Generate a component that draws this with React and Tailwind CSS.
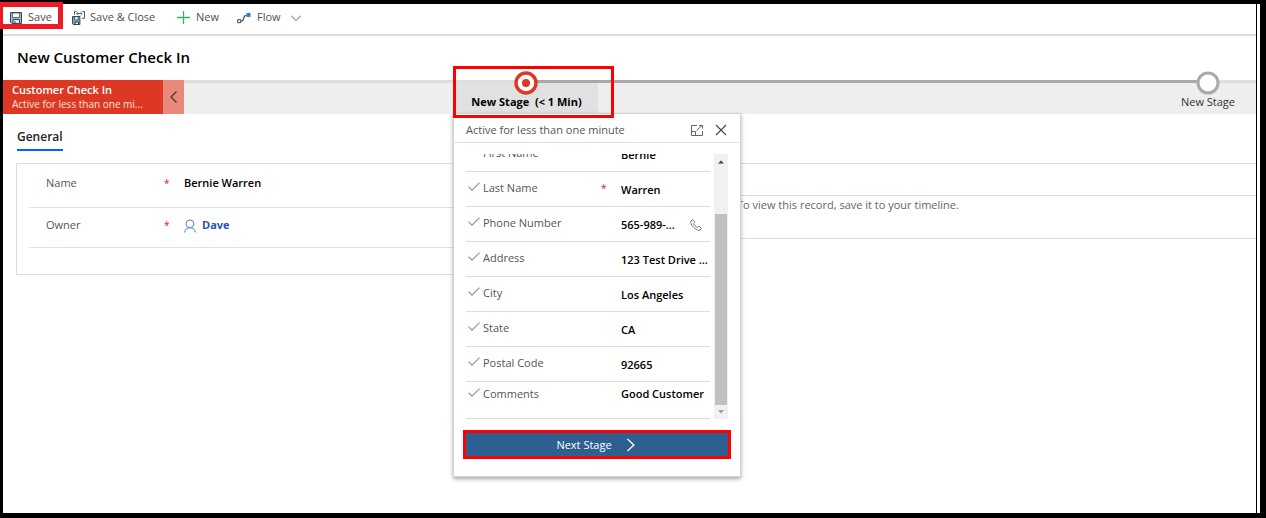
import React from "react";

const fields = [
  { id: "first", label: "First Name", value: "Bernie", clipped: true },
  { id: "last", label: "Last Name", value: "Warren", required: true },
  { id: "phone", label: "Phone Number", value: "565-989-...", phone: true },
  { id: "address", label: "Address", value: "123 Test Drive ..." },
  { id: "city", label: "City", value: "Los Angeles" },
  { id: "state", label: "State", value: "CA" },
  { id: "postal", label: "Postal Code", value: "92665" },
  { id: "comments", label: "Comments", value: "Good Customer", last: true },
];

function SaveIcon() {
  return (
    <svg className="h-3 w-3" viewBox="0 0 12 12" fill="none">
      <path d="M.5.5h11v11H1.800L.5 10.200z" fill="#8ec1e8" stroke="#3f474e" />
      <path d="M2.500 1h7v4.500h-7z" fill="#fff" stroke="#3f474e" strokeWidth=".8" />
      <path d="M3 7.500h6.500v4H3z" fill="#dfe9f1" stroke="#3f474e" />
      <path d="M5 9v2.500" stroke="#3f474e" />
    </svg>
  );
}

function SaveCloseIcon() {
  return (
    <svg className="h-[14px] w-[14px]" viewBox="0 0 14 14" fill="none">
      <path d="M.5 5.500h7.400v8H1.300l-.8-.8z" fill="#6fb1e4" stroke="#3b4248" />
      <path d="M2.500 5.800h3.800v3H2.500z" fill="#fff" stroke="#3b4248" strokeWidth=".8" />
      <path d="M3 11h3.500v2.500H3z" fill="#dfe9f1" stroke="#3b4248" />
      <path d="M2.500 3.700V.5h2M10.500.5h2v6.800h-2.500" stroke="#55595d" />
      <path d="M4.500 2.500h5.500M6.300 1 4.600 2.500 6.300 4M8.500 1l1.600 1.500L8.500 4" stroke="#2b7cd3" />
    </svg>
  );
}

function PlusIcon() {
  return (
    <svg className="h-[13px] w-[13px]" viewBox="0 0 13 13" fill="none">
      <path d="M6.500 0v13M0 6.500h13" stroke="#3fae68" strokeWidth="1.300" />
    </svg>
  );
}

function FlowIcon() {
  return (
    <svg className="h-3 w-[14px]" viewBox="0 0 14 12" fill="none">
      <path d="M.7 7.700h3v3h-3z" stroke="#444" />
      <path d="M4 9.200c4.500 0 1-6 5.500-6" stroke="#444" strokeWidth="1.100" />
      <path d="M9.500 1h4v4h-4z" fill="#2b7cd3" />
    </svg>
  );
}

function Chevron({ className, d }) {
  return (
    <svg className={className} viewBox="0 0 12 12" fill="none">
      <path d={d} stroke="currentColor" strokeWidth="1.100" />
    </svg>
  );
}

function CheckIcon() {
  return (
    <svg className="h-[9px] w-3 shrink-0" viewBox="0 0 12 9" fill="none">
      <path d="M.5 4.700 4 8.200 11.500.6" stroke="#7f9f7b" strokeWidth="1.100" />
    </svg>
  );
}

function PhoneIcon() {
  return (
    <svg className="h-3 w-3" viewBox="0 0 12 12" fill="none">
      <path
        d="M2.600.6 1 2.100c-.8 1 0 3.700 2.700 6.300s5.200 3.400 6.300 2.600l1.500-1.600-2.700-2.200-1.400 1.300C6 8 4 6 3.600 4.700l1.200-1.400z"
        stroke="#666"
        strokeWidth=".9"
        strokeLinejoin="round"
      />
    </svg>
  );
}

function PersonIcon() {
  return (
    <svg className="h-[14px] w-3" viewBox="0 0 12 14" fill="none">
      <circle cx="6" cy="4.800" r="3.900" stroke="#5b7fc4" />
      <path d="M.6 13.500C.8 10.500 3 8.700 6 8.700s5.200 1.800 5.400 4.800" stroke="#5b7fc4" />
    </svg>
  );
}

function PopOutIcon() {
  return (
    <svg className="h-[11px] w-3" viewBox="0 0 12 11" fill="none">
      <path d="M6 .5H.5v10h11V6M.5 6.500h4v4M5.500 5.500l5.500-5M8 .5h3.500v3.200" stroke="#555" strokeWidth=".9" />
    </svg>
  );
}

function CommandBar() {
  return (
    <nav className="relative flex h-8 items-center border-b-2 border-[#dcdcdc] pb-[3px] pl-[7px] text-[11px] text-[#505050]">
      <div className="pointer-events-none absolute -left-[5px] -top-0.5 h-[27px] w-[65px] border-[5px] border-[#ed1c24]" />
      <button className="flex w-[62px] items-center gap-1.5"><SaveIcon />Save</button>
      <button className="flex w-[105px] items-center gap-1"><SaveCloseIcon />Save &amp; Close</button>
      <button className="flex w-[60px] items-center gap-1.5"><PlusIcon />New</button>
      <button className="flex items-center gap-1.5"><FlowIcon />Flow</button>
      <button aria-label="More flow commands" className="ml-2.5">
        <Chevron className="h-2.5 w-2.5" d="M0 3 6 9l6-6" />
      </button>
    </nav>
  );
}

function FlyoutField({ field }) {
  const inputId = `stage-${field.id}`;
  return (
    <div
      className={
        field.last
          ? "flex h-[37px] shrink-0 items-start border-b border-[#dcdcdc] pt-1"
          : "flex h-[35px] shrink-0 items-start border-b border-[#dcdcdc] pt-2"
      }
    >
      <div className="flex h-4 w-[135px] items-start gap-[3px] pl-0.5">
        <div className={field.clipped ? "invisible" : "pt-0.5"}><CheckIcon /></div>
        <label htmlFor={inputId} className="text-[#555]">{field.label}</label>
      </div>
      <span className="w-5 text-[10px] leading-4 text-[#e81123]">{field.required ? "*" : ""}</span>
      <div className={field.last ? "flex min-w-0 flex-1 items-center" : "flex min-w-0 flex-1 items-center pt-0.5"}>
        <input id={inputId} defaultValue={field.value} className="h-4 w-0 min-w-0 flex-1 bg-transparent font-semibold text-black outline-none" />
        {field.phone && <button aria-label="Call" className="mr-2"><PhoneIcon /></button>}
      </div>
    </div>
  );
}

function Flyout() {
  return (
    <section className="absolute -left-0.5 top-[33px] z-10 w-[288px] border border-[#d4d4d4] bg-white text-[11px] leading-4 shadow-[0_2px_4px_rgba(0,0,0,0.35)]">
      <header className="flex h-[29px] items-center border-b border-[#e1e1e1] pl-3 pr-[13px] pt-1 text-[#555]">
        <span className="flex-1">Active for less than one minute</span>
        <button aria-label="Dock" className="mr-3"><PopOutIcon /></button>
        <button aria-label="Close">
          <Chevron className="h-3 w-3 text-[#444]" d="m1 1 10 10M11 1 1 11" />
        </button>
      </header>
      <div className="mx-3 mt-[11px] flex h-[265px] justify-between">
        <div className="flex w-[244px] flex-col justify-end overflow-hidden">
          {fields.map((field) => <FlyoutField key={field.id} field={field} />)}
        </div>
        <div className="flex w-[14px] flex-col items-center bg-[#f1f1f1]">
          <svg className="h-[60px] w-2" viewBox="0 0 8 60"><path d="M1 9.500h6l-3-3z" fill="#404040" /></svg>
          <div className="w-3 flex-1 bg-[#c1c1c1]" />
          <svg className="h-[14px] w-2" viewBox="0 0 8 14"><path d="M1 5h6L4 8.500z" fill="#a0a0a0" /></svg>
        </div>
      </div>
      <div className="mx-[9px] mb-[17px] mt-[11px] border-[3px] border-[#ff0000]">
        <button className="flex h-[23px] w-full items-center justify-center gap-3 bg-[#2e5f91] text-white">
          Next Stage
          <Chevron className="h-[14px] w-[14px]" d="m3 .8 5.500 5.200L3 11.200" />
        </button>
      </div>
    </section>
  );
}

function ProcessFlow() {
  return (
    <div className="flex h-[34px] bg-[#eee] text-[11px]">
      <div className="w-[160px] bg-[#dc3824] pl-[9px] pt-0.5 leading-[15px] text-white">
        <p className="truncate font-semibold">Customer Check In</p>
        <p className="truncate text-[10px] text-[#fbe3df]">Active for less than one mi...</p>
      </div>
      <button aria-label="Collapse" className="flex w-[21px] items-center justify-center bg-[#eb887c] text-[#333]">
        <Chevron className="h-3 w-3" d="M8.500.5 3 6l5.500 5.500" />
      </button>
      <div className="w-[271px] border-t-[3px] border-[#dedede]" />
      <div className="relative w-[143px] bg-[#e1e1e1]">
        <div className="flex h-[3px]">
          <div className="flex-1 bg-[#dedede]" />
          <div className="flex-1 bg-[#a9a9a9]" />
        </div>
        <svg className="absolute -top-[9px] left-[59px] h-6 w-6" viewBox="0 0 24 24">
          <circle cx="12" cy="12" r="10" fill="#fff" stroke="#dc3824" strokeWidth="3.400" />
          <circle cx="12" cy="12" r="4" fill="#dc3824" />
        </svg>
        <button className="mt-[11px] block w-full whitespace-pre text-center font-bold leading-4 text-black">New Stage  (&lt; 1 Min)</button>
        <Flyout />
        <div className="pointer-events-none absolute -left-0.5 -top-[14px] z-20 h-[52px] w-[161px] border-[3px] border-[#ff0000]" />
      </div>
      <div className="flex-1 border-t-[3px] border-[#a9a9a9]" />
      <div className="relative w-24">
        <div className="flex h-[3px]">
          <div className="flex-1 bg-[#a9a9a9]" />
          <div className="flex-1 bg-[#dedede]" />
        </div>
        <svg className="absolute -top-[9px] left-9 h-6 w-6" viewBox="0 0 24 24">
          <circle cx="12" cy="12" r="10" fill="#fff" stroke="#a9a9a9" strokeWidth="3" />
        </svg>
        <button className="mt-[11px] block w-full text-center leading-4 text-[#333]">New Stage</button>
      </div>
    </div>
  );
}

export default function App() {
  return (
    <div className="flex min-h-screen border-b-[5px] border-l-[3px] border-r-[6px] border-t-4 border-black bg-white pr-[3px] font-['Open_Sans','Noto_Sans',sans-serif]">
      <div className="min-w-0 flex-1 border-r border-black">
        <CommandBar />
        <h1 className="flex h-11 items-center pb-0.5 pl-[14px] text-[15px] font-semibold text-black">New Customer Check In</h1>
        <ProcessFlow />
        <div className="flex px-[14px] pt-3.5">
          <button className="flex h-[23px] items-start border-b-2 border-[#0062ff] text-[12px] font-semibold leading-[18px] text-[#222]">General</button>
        </div>
        <main className="mt-3 flex gap-4 pl-[13px] text-[11px]">
          <section className="h-28 flex-1 border border-[#dcdcdc] pl-3">
            <div className="flex h-11 items-center border-b border-[#e1e1e1] pb-1 pl-[17px]">
              <label htmlFor="name" className="w-[118px] text-[#555]">Name</label>
              <span className="w-5 text-[10px] text-[#e81123]">*</span>
              <input id="name" defaultValue="Bernie Warren" className="h-4 font-semibold text-black outline-none" />
            </div>
            <div className="flex h-10 items-center border-b border-[#e1e1e1] pb-1 pl-[17px]">
              <span className="w-[118px] text-[#555]">Owner</span>
              <span className="w-5 text-[10px] text-[#e81123]">*</span>
              <a href="#owner" className="flex items-center gap-1.5 font-bold text-[#1f55ad]"><PersonIcon />Dave</a>
            </div>
          </section>
          <section className="h-[76px] flex-1 border-y border-[#dcdcdc]">
            <div className="h-8 border-b border-[#dcdcdc]" />
            <p className="pl-[86px] leading-[18px] text-[#666]">To view this record, save it to your timeline.</p>
          </section>
        </main>
      </div>
    </div>
  );
}
